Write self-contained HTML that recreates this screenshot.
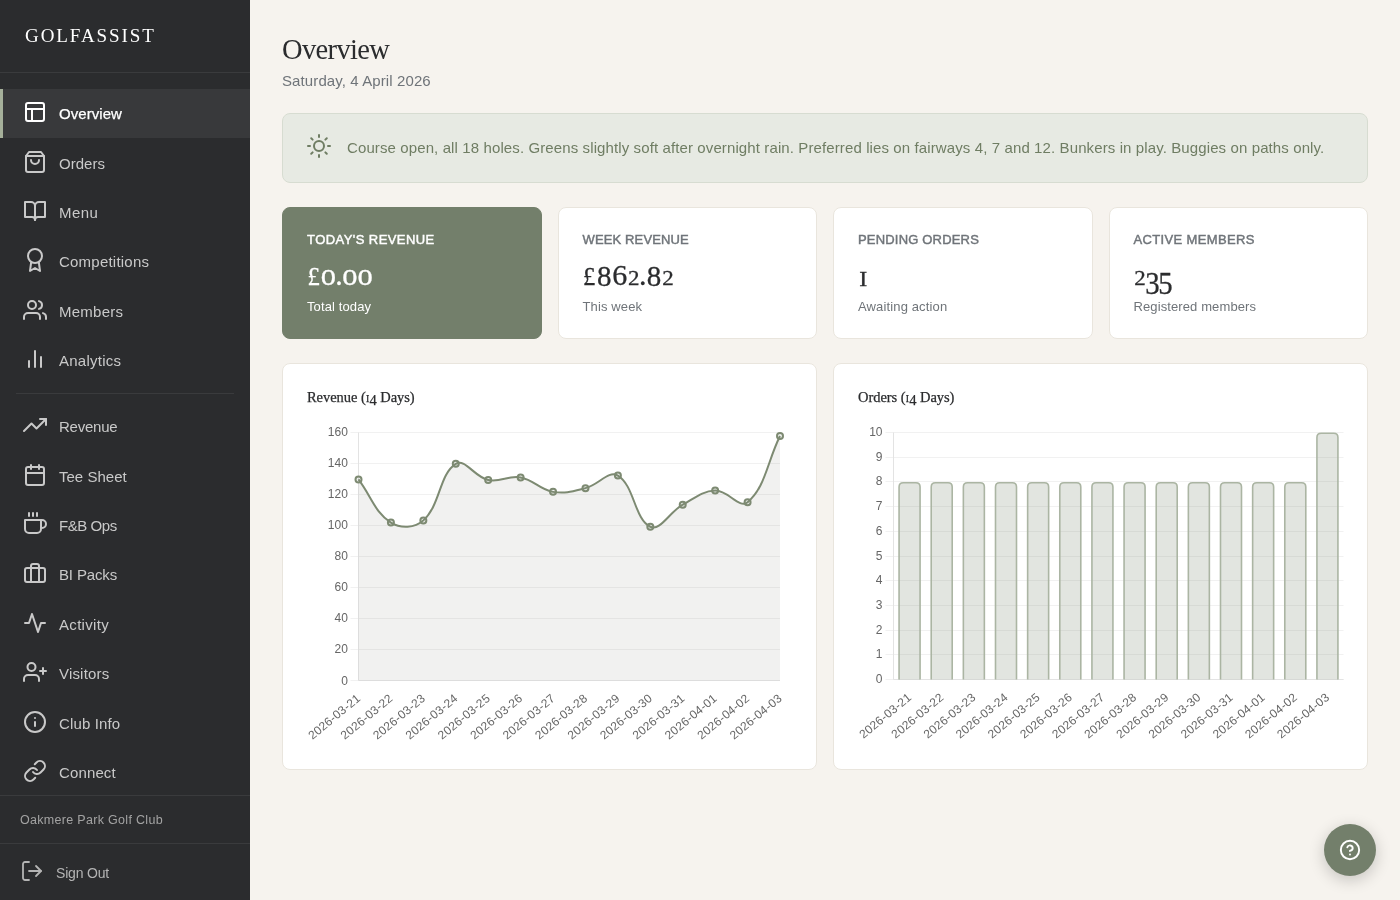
<!DOCTYPE html>
<html lang="en"><head><meta charset="utf-8"><title>Overview</title>
<style>
*{box-sizing:border-box;margin:0;padding:0}
html,body{width:1400px;height:900px;overflow:hidden}
body{font-family:"Liberation Sans",sans-serif;background:#f6f3ee;color:#2b2c2e;position:relative}
.side{will-change:transform;position:absolute;left:0;top:0;width:250px;height:900px;background:#2b2c2e;color:#cfcfcf}
.logo{position:absolute;left:25px;top:22px;font-family:"Liberation Serif",serif;font-size:19px;letter-spacing:1.92px;color:#fff;line-height:28px;white-space:nowrap}
.navwrap{position:absolute;left:0;top:72px;width:250px;height:724px;border-top:1px solid #3a3b3d;border-bottom:1px solid #3a3b3d;padding-top:15.5px}
.nav{display:flex;align-items:center;height:49.4px;padding-left:20px;border-left:3px solid transparent;color:#c9c9c9;font-size:15px;white-space:nowrap}
.nav span{position:relative;top:0.5px}
.nav .ic{flex:none;margin-right:12px;position:relative;top:-1px}
.nav.active{background:#38393b;border-left-color:#a5b09a;color:#fff;-webkit-text-stroke:0.25px currentColor}
.navdiv{height:1px;background:#3a3b3d;margin:8px 16px 7.7px 16px}
.club{position:absolute;left:20px;top:811px;font-size:12.5px;color:#a3a3a3;line-height:18px}
.signout{position:absolute;left:0;top:843px;width:250px;height:58px;border-top:1px solid #3a3b3d;display:flex;align-items:center;padding-left:20px;color:#b4b4b4;font-size:14px}
.signout .ic{margin-right:12px;position:relative;top:-2px}
.main{will-change:transform;position:absolute;left:250px;top:0;width:1150px;height:900px}
.title{position:absolute;left:32px;top:30px;font-family:"Liberation Serif",serif;font-weight:400;font-size:28.5px;line-height:40px;color:#2b2c2e;white-space:nowrap}
.date{position:absolute;left:32px;top:70px;font-size:15px;line-height:22px;color:#6f7479;white-space:nowrap}
.banner{position:absolute;left:32px;top:113px;width:1086px;height:70px;background:#e7eae3;border:1px solid #d7dcd1;border-radius:8px;display:flex;align-items:center;padding-left:24px;color:#6f7d63;font-size:15px;white-space:nowrap}
.banner .ic{margin-right:16px;flex:none;position:relative;top:-2px}
.banner span{position:relative;top:-0.7px}
.stats{position:absolute;left:32px;top:207px;width:1086px;height:132px;display:flex;gap:16px}
.stat{flex:1 1 0;background:#fff;border:1px solid #e9e5dd;border-radius:8px;padding:24px 24px;position:relative}
.stat.hero{background:#737f6b;border-color:#737f6b;color:#fff}
.stat .lab{position:absolute;left:24px;top:23px;font-size:13px;font-weight:400;-webkit-text-stroke:0.45px currentColor;color:#6f7479;line-height:18px;white-space:nowrap}
.stat.hero .lab{color:#fff}
.stat .val{position:absolute;left:24px;top:46px;width:200px;height:40px;font-family:"Liberation Serif",serif;color:#2b2c2e;white-space:nowrap}
.g{-webkit-text-stroke:0.3px currentColor;position:absolute;display:block;text-align:center;line-height:40px;height:40px;margin-top:0;transform-origin:50% 50%}
.stat.hero .val{color:#fff}
.stat .sub{position:absolute;left:24px;top:90px;font-size:13px;line-height:18px;color:#6f7479;white-space:nowrap}
.stat.hero .sub{color:#fff}
.val i,.ctitle i{font-style:normal}
.val b,.ctitle b{font-weight:400}
.charts{position:absolute;left:32px;top:363px;width:1086px;height:407px;display:flex;gap:16px}
.chart{flex:1 1 0;background:#fff;border:1px solid #e9e5dd;border-radius:8px;position:relative}
.ctitle{position:absolute;left:24px;top:22px;font-family:"Liberation Serif",serif;font-size:14.5px;letter-spacing:-0.05px;-webkit-text-stroke:0.25px currentColor;line-height:22px;color:#2b2c2e;white-space:nowrap}
.ctitle i{font-size:9.8px;margin:0 0.3px 0 0.2px}
.ctitle b{position:relative;top:2.6px}
.cv{position:absolute;left:-1px !important;top:-1px !important}
.tk{font-family:"Liberation Sans",sans-serif;font-size:12px;fill:#666}
.fab{will-change:transform;position:absolute;left:1324px;top:824px;width:52px;height:52px;border-radius:26px;background:#737f6b;color:#fff;display:flex;align-items:center;justify-content:center;box-shadow:0 4px 16px rgba(0,0,0,0.2)}

</style></head>
<body>
<aside class="side">
<div class="logo">GOLFASSIST</div>
<nav class="navwrap">
<a class="nav active"><svg class="ic" width="24" height="24" viewBox="0 0 24 24" fill="none" stroke="currentColor" stroke-width="2" stroke-linecap="round" stroke-linejoin="round"><rect x="3" y="3" width="18" height="18" rx="2" ry="2"/><line x1="3" y1="9" x2="21" y2="9"/><line x1="9" y1="21" x2="9" y2="9"/></svg><span style="letter-spacing:0.06px">Overview</span></a>
<a class="nav"><svg class="ic" width="24" height="24" viewBox="0 0 24 24" fill="none" stroke="currentColor" stroke-width="2" stroke-linecap="round" stroke-linejoin="round"><path d="M6 2 3 6v14a2 2 0 0 0 2 2h14a2 2 0 0 0 2-2V6l-3-4z"/><line x1="3" y1="6" x2="21" y2="6"/><path d="M16 10a4 4 0 0 1-8 0"/></svg><span style="letter-spacing:0.032px">Orders</span></a>
<a class="nav"><svg class="ic" width="24" height="24" viewBox="0 0 24 24" fill="none" stroke="currentColor" stroke-width="2" stroke-linecap="round" stroke-linejoin="round"><path d="M2 3h6a4 4 0 0 1 4 4v14a3 3 0 0 0-3-3H2z"/><path d="M22 3h-6a4 4 0 0 0-4 4v14a3 3 0 0 1 3-3h7z"/></svg><span style="letter-spacing:0.44px">Menu</span></a>
<a class="nav"><svg class="ic" width="24" height="24" viewBox="0 0 24 24" fill="none" stroke="currentColor" stroke-width="2" stroke-linecap="round" stroke-linejoin="round"><circle cx="12" cy="8" r="7"/><polyline points="8.21 13.89 7 23 12 20 17 23 15.79 13.88"/></svg><span style="letter-spacing:0.224px">Competitions</span></a>
<a class="nav"><svg class="ic" width="24" height="24" viewBox="0 0 24 24" fill="none" stroke="currentColor" stroke-width="2" stroke-linecap="round" stroke-linejoin="round"><path d="M17 21v-2a4 4 0 0 0-4-4H5a4 4 0 0 0-4 4v2"/><circle cx="9" cy="7" r="4"/><path d="M23 21v-2a4 4 0 0 0-3-3.87"/><path d="M16 3.13a4 4 0 0 1 0 7.75"/></svg><span style="letter-spacing:0.248px">Members</span></a>
<a class="nav"><svg class="ic" width="24" height="24" viewBox="0 0 24 24" fill="none" stroke="currentColor" stroke-width="2" stroke-linecap="round" stroke-linejoin="round"><line x1="18" y1="20" x2="18" y2="10"/><line x1="12" y1="20" x2="12" y2="4"/><line x1="6" y1="20" x2="6" y2="14"/></svg><span style="letter-spacing:0.247px">Analytics</span></a>
<div class="navdiv"></div>
<a class="nav"><svg class="ic" width="24" height="24" viewBox="0 0 24 24" fill="none" stroke="currentColor" stroke-width="2" stroke-linecap="round" stroke-linejoin="round"><polyline points="23 6 13.5 15.5 8.5 10.5 1 18"/><polyline points="17 6 23 6 23 12"/></svg><span style="letter-spacing:-0.234px">Revenue</span></a>
<a class="nav"><svg class="ic" width="24" height="24" viewBox="0 0 24 24" fill="none" stroke="currentColor" stroke-width="2" stroke-linecap="round" stroke-linejoin="round"><rect x="3" y="4" width="18" height="18" rx="2" ry="2"/><line x1="16" y1="2" x2="16" y2="6"/><line x1="8" y1="2" x2="8" y2="6"/><line x1="3" y1="10" x2="21" y2="10"/></svg><span style="letter-spacing:0.015px">Tee Sheet</span></a>
<a class="nav"><svg class="ic" width="24" height="24" viewBox="0 0 24 24" fill="none" stroke="currentColor" stroke-width="2" stroke-linecap="round" stroke-linejoin="round"><path d="M18 8h1a4 4 0 0 1 0 8h-1"/><path d="M2 8h16v9a4 4 0 0 1-4 4H6a4 4 0 0 1-4-4V8z"/><line x1="6" y1="1" x2="6" y2="4"/><line x1="10" y1="1" x2="10" y2="4"/><line x1="14" y1="1" x2="14" y2="4"/></svg><span style="letter-spacing:-0.442px">F&amp;B Ops</span></a>
<a class="nav"><svg class="ic" width="24" height="24" viewBox="0 0 24 24" fill="none" stroke="currentColor" stroke-width="2" stroke-linecap="round" stroke-linejoin="round"><rect x="2" y="7" width="20" height="14" rx="2" ry="2"/><path d="M16 21V5a2 2 0 0 0-2-2h-4a2 2 0 0 0-2 2v16"/></svg><span style="letter-spacing:-0.141px">BI Packs</span></a>
<a class="nav"><svg class="ic" width="24" height="24" viewBox="0 0 24 24" fill="none" stroke="currentColor" stroke-width="2" stroke-linecap="round" stroke-linejoin="round"><polyline points="22 12 18 12 15 21 9 3 6 12 2 12"/></svg><span style="letter-spacing:0.314px">Activity</span></a>
<a class="nav"><svg class="ic" width="24" height="24" viewBox="0 0 24 24" fill="none" stroke="currentColor" stroke-width="2" stroke-linecap="round" stroke-linejoin="round"><path d="M16 21v-2a4 4 0 0 0-4-4H5a4 4 0 0 0-4 4v2"/><circle cx="8.5" cy="7" r="4"/><line x1="20" y1="8" x2="20" y2="14"/><line x1="23" y1="11" x2="17" y2="11"/></svg><span style="letter-spacing:0.185px">Visitors</span></a>
<a class="nav"><svg class="ic" width="24" height="24" viewBox="0 0 24 24" fill="none" stroke="currentColor" stroke-width="2" stroke-linecap="round" stroke-linejoin="round"><circle cx="12" cy="12" r="10"/><line x1="12" y1="16" x2="12" y2="12"/><line x1="12" y1="8" x2="12.01" y2="8"/></svg><span style="letter-spacing:0.126px">Club Info</span></a>
<a class="nav"><svg class="ic" width="24" height="24" viewBox="0 0 24 24" fill="none" stroke="currentColor" stroke-width="2" stroke-linecap="round" stroke-linejoin="round"><path d="M10 13a5 5 0 0 0 7.54.54l3-3a5 5 0 0 0-7.07-7.07l-1.72 1.71"/><path d="M14 11a5 5 0 0 0-7.54-.54l-3 3a5 5 0 0 0 7.07 7.07l1.71-1.71"/></svg><span style="letter-spacing:0.133px">Connect</span></a>
</nav>
<div class="club" style="letter-spacing:0.309px">Oakmere Park Golf Club</div>
<div class="signout"><svg class="ic so" width="24" height="24" viewBox="0 0 24 24" fill="none" stroke="currentColor" stroke-width="1.8" stroke-linecap="round" stroke-linejoin="round"><path d="M9 21H5a2 2 0 0 1-2-2V5a2 2 0 0 1 2-2h4"/><polyline points="16 17 21 12 16 7"/><line x1="21" y1="12" x2="9" y2="12"/></svg><span style="letter-spacing:-0.184px">Sign Out</span></div>
</aside>
<main class="main">
<h1 class="title" style="letter-spacing:-0.641px">Overview</h1>
<div class="date" style="letter-spacing:0.106px">Saturday, 4 April 2026</div>
<div class="banner"><svg class="ic sun" width="24" height="24" viewBox="0 0 24 24" fill="none" stroke="currentColor" stroke-width="2" stroke-linecap="round" stroke-linejoin="round"><circle cx="12" cy="12" r="5"/><line x1="12" y1="1" x2="12" y2="3"/><line x1="12" y1="21" x2="12" y2="23"/><line x1="4.22" y1="4.22" x2="5.64" y2="5.64"/><line x1="18.36" y1="18.36" x2="19.78" y2="19.78"/><line x1="1" y1="12" x2="3" y2="12"/><line x1="21" y1="12" x2="23" y2="12"/><line x1="4.22" y1="19.78" x2="5.64" y2="18.36"/><line x1="18.36" y1="5.64" x2="19.78" y2="4.22"/></svg><span style="letter-spacing:0.111px">Course open, all 18 holes. Greens slightly soft after overnight rain. Preferred lies on fairways 4, 7 and 12. Bunkers in play. Buggies on paths only.</span></div>
<div class="stats">
<div class="stat hero"><div class="lab" style="letter-spacing:0.434px">TODAY'S REVENUE</div><div class="val"><span class="g" style="left:-9.3px;width:31.6px;font-size:24.5px;top:3.03px;">£</span><span class="g" style="left:4.4px;width:34.0px;font-size:30.5px;top:1.01px;">o</span><span class="g" style="left:19.8px;width:24.5px;font-size:30px;top:1.18px;">.</span><span class="g" style="left:25.9px;width:34.2px;font-size:30.5px;top:1.01px;">o</span><span class="g" style="left:41.2px;width:33.9px;font-size:30.5px;top:1.01px;">o</span></div><div class="sub" style="letter-spacing:0.113px">Total today</div></div>
<div class="stat"><div class="lab" style="letter-spacing:0.139px">WEEK REVENUE</div><div class="val"><span class="g" style="left:-9.4px;width:32.0px;font-size:24.5px;top:3.03px;">£</span><span class="g" style="left:5.0px;width:33.5px;font-size:29px;top:1.51px;">8</span><span class="g" style="left:20.6px;width:33.3px;font-size:30px;top:1.18px;">6</span><span class="g" style="left:35.5px;width:31.3px;font-size:20.5px;top:4.38px;transform:scaleX(1.12);">2</span><span class="g" style="left:48.3px;width:24.0px;font-size:30px;top:1.18px;">.</span><span class="g" style="left:54.9px;width:33.3px;font-size:29px;top:1.51px;">8</span><span class="g" style="left:69.9px;width:32.0px;font-size:20.5px;top:4.38px;transform:scaleX(1.12);">2</span></div><div class="sub" style="letter-spacing:0.123px">This week</div></div>
<div class="stat"><div class="lab" style="letter-spacing:0.185px">PENDING ORDERS</div><div class="val"><span class="g" style="left:-9.0px;width:28.4px;font-size:20px;top:4.55px;transform:scaleX(1.2);">I</span></div><div class="sub" style="letter-spacing:0.138px">Awaiting action</div></div>
<div class="stat"><div class="lab" style="letter-spacing:0.36px">ACTIVE MEMBERS</div><div class="val"><span class="g" style="left:-9.5px;width:32.0px;font-size:20.5px;top:4.38px;transform:scaleX(1.12);">2</span><span class="g" style="left:3.4px;width:31.1px;font-size:32px;top:9.10px;transform:scaleX(0.9);">3</span><span class="g" style="left:16.2px;width:30.7px;font-size:32px;top:9.10px;transform:scaleX(0.9);">5</span></div><div class="sub" style="letter-spacing:0.108px">Registered members</div></div>
</div>
<div class="charts">
<div class="chart"><div class="ctitle">Revenue (<i>I</i><b>4</b> Days)</div>
<svg class="cv" width="535" height="406" viewBox="0 0 535 406" style="left:0;top:0">
<line x1="68.5" y1="317.5" x2="498.0" y2="317.5" stroke="#f1f1f1" stroke-width="1"/>
<text x="65.9" y="321.8" text-anchor="end" class="tk">0</text>
<line x1="68.5" y1="286.5" x2="498.0" y2="286.5" stroke="#f1f1f1" stroke-width="1"/>
<text x="65.9" y="290.1" text-anchor="end" class="tk">20</text>
<line x1="68.5" y1="255.5" x2="498.0" y2="255.5" stroke="#f1f1f1" stroke-width="1"/>
<text x="65.9" y="259.1" text-anchor="end" class="tk">40</text>
<line x1="68.5" y1="224.5" x2="498.0" y2="224.5" stroke="#f1f1f1" stroke-width="1"/>
<text x="65.9" y="228.1" text-anchor="end" class="tk">60</text>
<line x1="68.5" y1="193.5" x2="498.0" y2="193.5" stroke="#f1f1f1" stroke-width="1"/>
<text x="65.9" y="197.1" text-anchor="end" class="tk">80</text>
<line x1="68.5" y1="162.5" x2="498.0" y2="162.5" stroke="#f1f1f1" stroke-width="1"/>
<text x="65.9" y="166.1" text-anchor="end" class="tk">100</text>
<line x1="68.5" y1="131.5" x2="498.0" y2="131.5" stroke="#f1f1f1" stroke-width="1"/>
<text x="65.9" y="135.1" text-anchor="end" class="tk">120</text>
<line x1="68.5" y1="100.5" x2="498.0" y2="100.5" stroke="#f1f1f1" stroke-width="1"/>
<text x="65.9" y="104.1" text-anchor="end" class="tk">140</text>
<line x1="68.5" y1="69.5" x2="498.0" y2="69.5" stroke="#f1f1f1" stroke-width="1"/>
<text x="65.9" y="73.1" text-anchor="end" class="tk">160</text>
<line x1="76.5" y1="69.5" x2="76.5" y2="317.5" stroke="#e3e3e3" stroke-width="1"/>
<line x1="76.5" y1="317.5" x2="498.0" y2="317.5" stroke="#e3e3e3" stroke-width="1"/>
<path d="M76.50 116.47 C89.47 133.70 92.74 149.34 108.92 159.55 C118.68 165.71 132.72 165.20 141.35 157.38 C158.66 141.70 157.09 111.21 173.77 100.81 C183.03 95.03 192.53 114.06 206.19 116.93 C218.46 119.51 226.21 112.17 238.62 114.45 C252.15 116.94 257.53 126.64 271.04 128.87 C283.47 130.91 290.90 128.30 303.46 125.14 C316.84 121.79 326.42 106.96 335.88 112.59 C352.36 122.40 352.56 156.66 368.31 163.74 C378.50 168.32 387.10 149.32 400.73 141.73 C413.03 134.88 420.01 128.13 433.15 127.62 C445.95 127.14 457.32 146.20 465.58 139.25 C483.25 124.38 485.03 99.54 498.00 73.06 L498.00 317.50 L76.50 317.50 Z" fill="rgba(105,105,90,0.09)" stroke="none"/>
<path d="M76.50 116.47 C89.47 133.70 92.74 149.34 108.92 159.55 C118.68 165.71 132.72 165.20 141.35 157.38 C158.66 141.70 157.09 111.21 173.77 100.81 C183.03 95.03 192.53 114.06 206.19 116.93 C218.46 119.51 226.21 112.17 238.62 114.45 C252.15 116.94 257.53 126.64 271.04 128.87 C283.47 130.91 290.90 128.30 303.46 125.14 C316.84 121.79 326.42 106.96 335.88 112.59 C352.36 122.40 352.56 156.66 368.31 163.74 C378.50 168.32 387.10 149.32 400.73 141.73 C413.03 134.88 420.01 128.13 433.15 127.62 C445.95 127.14 457.32 146.20 465.58 139.25 C483.25 124.38 485.03 99.54 498.00 73.06" fill="none" stroke="#7d8a72" stroke-width="2" stroke-linecap="butt" stroke-linejoin="miter"/>
<circle cx="76.50" cy="116.47" r="3" fill="rgba(122,136,112,0.12)" stroke="#7d8a72" stroke-width="2"/>
<circle cx="108.92" cy="159.55" r="3" fill="rgba(122,136,112,0.12)" stroke="#7d8a72" stroke-width="2"/>
<circle cx="141.35" cy="157.38" r="3" fill="rgba(122,136,112,0.12)" stroke="#7d8a72" stroke-width="2"/>
<circle cx="173.77" cy="100.81" r="3" fill="rgba(122,136,112,0.12)" stroke="#7d8a72" stroke-width="2"/>
<circle cx="206.19" cy="116.93" r="3" fill="rgba(122,136,112,0.12)" stroke="#7d8a72" stroke-width="2"/>
<circle cx="238.62" cy="114.45" r="3" fill="rgba(122,136,112,0.12)" stroke="#7d8a72" stroke-width="2"/>
<circle cx="271.04" cy="128.87" r="3" fill="rgba(122,136,112,0.12)" stroke="#7d8a72" stroke-width="2"/>
<circle cx="303.46" cy="125.14" r="3" fill="rgba(122,136,112,0.12)" stroke="#7d8a72" stroke-width="2"/>
<circle cx="335.88" cy="112.59" r="3" fill="rgba(122,136,112,0.12)" stroke="#7d8a72" stroke-width="2"/>
<circle cx="368.31" cy="163.74" r="3" fill="rgba(122,136,112,0.12)" stroke="#7d8a72" stroke-width="2"/>
<circle cx="400.73" cy="141.73" r="3" fill="rgba(122,136,112,0.12)" stroke="#7d8a72" stroke-width="2"/>
<circle cx="433.15" cy="127.62" r="3" fill="rgba(122,136,112,0.12)" stroke="#7d8a72" stroke-width="2"/>
<circle cx="465.58" cy="139.25" r="3" fill="rgba(122,136,112,0.12)" stroke="#7d8a72" stroke-width="2"/>
<circle cx="498.00" cy="73.06" r="3" fill="rgba(122,136,112,0.12)" stroke="#7d8a72" stroke-width="2"/>
<text transform="translate(76.80 333.70) rotate(-39.6)" text-anchor="end" class="tk" letter-spacing="0.2" dy="0.32em">2026-03-21</text>
<text transform="translate(109.22 333.70) rotate(-39.6)" text-anchor="end" class="tk" letter-spacing="0.2" dy="0.32em">2026-03-22</text>
<text transform="translate(141.65 333.70) rotate(-39.6)" text-anchor="end" class="tk" letter-spacing="0.2" dy="0.32em">2026-03-23</text>
<text transform="translate(174.07 333.70) rotate(-39.6)" text-anchor="end" class="tk" letter-spacing="0.2" dy="0.32em">2026-03-24</text>
<text transform="translate(206.49 333.70) rotate(-39.6)" text-anchor="end" class="tk" letter-spacing="0.2" dy="0.32em">2026-03-25</text>
<text transform="translate(238.92 333.70) rotate(-39.6)" text-anchor="end" class="tk" letter-spacing="0.2" dy="0.32em">2026-03-26</text>
<text transform="translate(271.34 333.70) rotate(-39.6)" text-anchor="end" class="tk" letter-spacing="0.2" dy="0.32em">2026-03-27</text>
<text transform="translate(303.76 333.70) rotate(-39.6)" text-anchor="end" class="tk" letter-spacing="0.2" dy="0.32em">2026-03-28</text>
<text transform="translate(336.18 333.70) rotate(-39.6)" text-anchor="end" class="tk" letter-spacing="0.2" dy="0.32em">2026-03-29</text>
<text transform="translate(368.61 333.70) rotate(-39.6)" text-anchor="end" class="tk" letter-spacing="0.2" dy="0.32em">2026-03-30</text>
<text transform="translate(401.03 333.70) rotate(-39.6)" text-anchor="end" class="tk" letter-spacing="0.2" dy="0.32em">2026-03-31</text>
<text transform="translate(433.45 333.70) rotate(-39.6)" text-anchor="end" class="tk" letter-spacing="0.2" dy="0.32em">2026-04-01</text>
<text transform="translate(465.88 333.70) rotate(-39.6)" text-anchor="end" class="tk" letter-spacing="0.2" dy="0.32em">2026-04-02</text>
<text transform="translate(498.30 333.70) rotate(-39.6)" text-anchor="end" class="tk" letter-spacing="0.2" dy="0.32em">2026-04-03</text>
</svg></div>
<div class="chart"><div class="ctitle">Orders (<i>I</i><b>4</b> Days)</div>
<svg class="cv" width="535" height="406" viewBox="0 0 535 406" style="left:0;top:0">
<line x1="52.5" y1="316.5" x2="510.5" y2="316.5" stroke="#f1f1f1" stroke-width="1"/>
<text x="49.5" y="320.1" text-anchor="end" class="tk">0</text>
<line x1="52.5" y1="291.5" x2="510.5" y2="291.5" stroke="#f1f1f1" stroke-width="1"/>
<text x="49.5" y="295.1" text-anchor="end" class="tk">1</text>
<line x1="52.5" y1="267.5" x2="510.5" y2="267.5" stroke="#f1f1f1" stroke-width="1"/>
<text x="49.5" y="271.1" text-anchor="end" class="tk">2</text>
<line x1="52.5" y1="242.5" x2="510.5" y2="242.5" stroke="#f1f1f1" stroke-width="1"/>
<text x="49.5" y="246.1" text-anchor="end" class="tk">3</text>
<line x1="52.5" y1="217.5" x2="510.5" y2="217.5" stroke="#f1f1f1" stroke-width="1"/>
<text x="49.5" y="221.1" text-anchor="end" class="tk">4</text>
<line x1="52.5" y1="193.5" x2="510.5" y2="193.5" stroke="#f1f1f1" stroke-width="1"/>
<text x="49.5" y="197.1" text-anchor="end" class="tk">5</text>
<line x1="52.5" y1="168.5" x2="510.5" y2="168.5" stroke="#f1f1f1" stroke-width="1"/>
<text x="49.5" y="172.1" text-anchor="end" class="tk">6</text>
<line x1="52.5" y1="143.5" x2="510.5" y2="143.5" stroke="#f1f1f1" stroke-width="1"/>
<text x="49.5" y="147.1" text-anchor="end" class="tk">7</text>
<line x1="52.5" y1="118.5" x2="510.5" y2="118.5" stroke="#f1f1f1" stroke-width="1"/>
<text x="49.5" y="122.1" text-anchor="end" class="tk">8</text>
<line x1="52.5" y1="94.5" x2="510.5" y2="94.5" stroke="#f1f1f1" stroke-width="1"/>
<text x="49.5" y="98.1" text-anchor="end" class="tk">9</text>
<line x1="52.5" y1="69.5" x2="510.5" y2="69.5" stroke="#f1f1f1" stroke-width="1"/>
<text x="49.5" y="73.1" text-anchor="end" class="tk">10</text>
<line x1="60.5" y1="69.5" x2="60.5" y2="316.5" stroke="#e3e3e3" stroke-width="1"/>
<line x1="60.5" y1="316.5" x2="510.5" y2="316.5" stroke="#e3e3e3" stroke-width="1"/>
<path d="M66.07 316.50 L66.07 123.90 Q66.07 119.70 70.27 119.70 L82.87 119.70 Q87.07 119.70 87.07 123.90 L87.07 316.50" fill="rgba(122,136,112,0.22)" stroke="#abb5a3" stroke-width="1.6"/>
<path d="M98.21 316.50 L98.21 123.90 Q98.21 119.70 102.41 119.70 L115.01 119.70 Q119.21 119.70 119.21 123.90 L119.21 316.50" fill="rgba(122,136,112,0.22)" stroke="#abb5a3" stroke-width="1.6"/>
<path d="M130.36 316.50 L130.36 123.90 Q130.36 119.70 134.56 119.70 L147.16 119.70 Q151.36 119.70 151.36 123.90 L151.36 316.50" fill="rgba(122,136,112,0.22)" stroke="#abb5a3" stroke-width="1.6"/>
<path d="M162.50 316.50 L162.50 123.90 Q162.50 119.70 166.70 119.70 L179.30 119.70 Q183.50 119.70 183.50 123.90 L183.50 316.50" fill="rgba(122,136,112,0.22)" stroke="#abb5a3" stroke-width="1.6"/>
<path d="M194.64 316.50 L194.64 123.90 Q194.64 119.70 198.84 119.70 L211.44 119.70 Q215.64 119.70 215.64 123.90 L215.64 316.50" fill="rgba(122,136,112,0.22)" stroke="#abb5a3" stroke-width="1.6"/>
<path d="M226.79 316.50 L226.79 123.90 Q226.79 119.70 230.99 119.70 L243.59 119.70 Q247.79 119.70 247.79 123.90 L247.79 316.50" fill="rgba(122,136,112,0.22)" stroke="#abb5a3" stroke-width="1.6"/>
<path d="M258.93 316.50 L258.93 123.90 Q258.93 119.70 263.13 119.70 L275.73 119.70 Q279.93 119.70 279.93 123.90 L279.93 316.50" fill="rgba(122,136,112,0.22)" stroke="#abb5a3" stroke-width="1.6"/>
<path d="M291.07 316.50 L291.07 123.90 Q291.07 119.70 295.27 119.70 L307.87 119.70 Q312.07 119.70 312.07 123.90 L312.07 316.50" fill="rgba(122,136,112,0.22)" stroke="#abb5a3" stroke-width="1.6"/>
<path d="M323.21 316.50 L323.21 123.90 Q323.21 119.70 327.41 119.70 L340.01 119.70 Q344.21 119.70 344.21 123.90 L344.21 316.50" fill="rgba(122,136,112,0.22)" stroke="#abb5a3" stroke-width="1.6"/>
<path d="M355.36 316.50 L355.36 123.90 Q355.36 119.70 359.56 119.70 L372.16 119.70 Q376.36 119.70 376.36 123.90 L376.36 316.50" fill="rgba(122,136,112,0.22)" stroke="#abb5a3" stroke-width="1.6"/>
<path d="M387.50 316.50 L387.50 123.90 Q387.50 119.70 391.70 119.70 L404.30 119.70 Q408.50 119.70 408.50 123.90 L408.50 316.50" fill="rgba(122,136,112,0.22)" stroke="#abb5a3" stroke-width="1.6"/>
<path d="M419.64 316.50 L419.64 123.90 Q419.64 119.70 423.84 119.70 L436.44 119.70 Q440.64 119.70 440.64 123.90 L440.64 316.50" fill="rgba(122,136,112,0.22)" stroke="#abb5a3" stroke-width="1.6"/>
<path d="M451.79 316.50 L451.79 123.90 Q451.79 119.70 455.99 119.70 L468.59 119.70 Q472.79 119.70 472.79 123.90 L472.79 316.50" fill="rgba(122,136,112,0.22)" stroke="#abb5a3" stroke-width="1.6"/>
<path d="M483.93 316.50 L483.93 74.50 Q483.93 70.30 488.13 70.30 L500.73 70.30 Q504.93 70.30 504.93 74.50 L504.93 316.50" fill="rgba(122,136,112,0.22)" stroke="#abb5a3" stroke-width="1.6"/>
<text transform="translate(76.87 332.70) rotate(-39.6)" text-anchor="end" class="tk" letter-spacing="0.2" dy="0.32em">2026-03-21</text>
<text transform="translate(109.01 332.70) rotate(-39.6)" text-anchor="end" class="tk" letter-spacing="0.2" dy="0.32em">2026-03-22</text>
<text transform="translate(141.16 332.70) rotate(-39.6)" text-anchor="end" class="tk" letter-spacing="0.2" dy="0.32em">2026-03-23</text>
<text transform="translate(173.30 332.70) rotate(-39.6)" text-anchor="end" class="tk" letter-spacing="0.2" dy="0.32em">2026-03-24</text>
<text transform="translate(205.44 332.70) rotate(-39.6)" text-anchor="end" class="tk" letter-spacing="0.2" dy="0.32em">2026-03-25</text>
<text transform="translate(237.59 332.70) rotate(-39.6)" text-anchor="end" class="tk" letter-spacing="0.2" dy="0.32em">2026-03-26</text>
<text transform="translate(269.73 332.70) rotate(-39.6)" text-anchor="end" class="tk" letter-spacing="0.2" dy="0.32em">2026-03-27</text>
<text transform="translate(301.87 332.70) rotate(-39.6)" text-anchor="end" class="tk" letter-spacing="0.2" dy="0.32em">2026-03-28</text>
<text transform="translate(334.01 332.70) rotate(-39.6)" text-anchor="end" class="tk" letter-spacing="0.2" dy="0.32em">2026-03-29</text>
<text transform="translate(366.16 332.70) rotate(-39.6)" text-anchor="end" class="tk" letter-spacing="0.2" dy="0.32em">2026-03-30</text>
<text transform="translate(398.30 332.70) rotate(-39.6)" text-anchor="end" class="tk" letter-spacing="0.2" dy="0.32em">2026-03-31</text>
<text transform="translate(430.44 332.70) rotate(-39.6)" text-anchor="end" class="tk" letter-spacing="0.2" dy="0.32em">2026-04-01</text>
<text transform="translate(462.59 332.70) rotate(-39.6)" text-anchor="end" class="tk" letter-spacing="0.2" dy="0.32em">2026-04-02</text>
<text transform="translate(494.73 332.70) rotate(-39.6)" text-anchor="end" class="tk" letter-spacing="0.2" dy="0.32em">2026-04-03</text>
</svg></div>
</div>
</main>
<div class="fab"><svg class="ic" width="22" height="22" viewBox="0 0 24 24" fill="none" stroke="currentColor" stroke-width="2.1" stroke-linecap="round" stroke-linejoin="round"><circle cx="12" cy="12" r="10"/><path d="M9.09 9a3 3 0 0 1 5.83 1c0 2-3 3-3 3"/><line x1="12" y1="17" x2="12.01" y2="17"/></svg></div>
</body></html>
